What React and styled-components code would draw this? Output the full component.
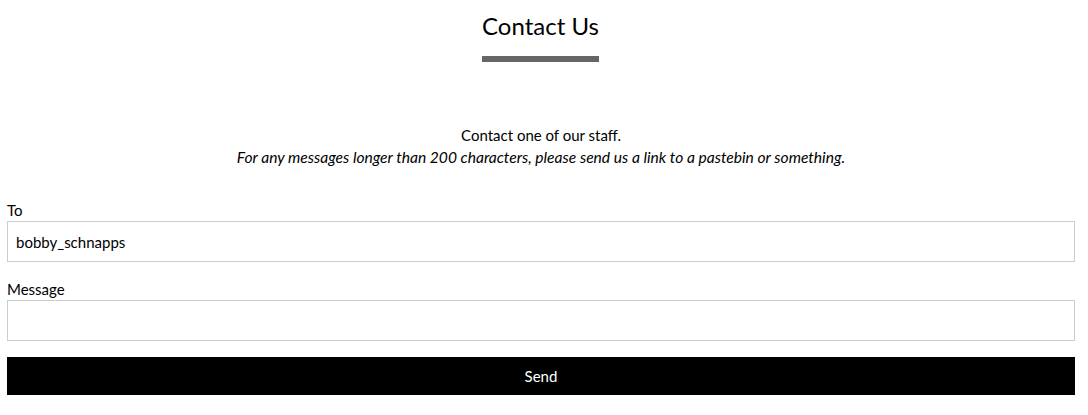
import styled, { createGlobalStyle } from 'styled-components';

const GlobalStyle = createGlobalStyle`
  * { box-sizing: border-box; }
  body {
    margin: 0;
    background: #fff;
    font-family: 'Lato', 'Liberation Sans', sans-serif;
    color: #000;
  }
`;

export default function App() {
  return (
    <>
      <GlobalStyle />
      <Page>
        <Header>
          <Title>Contact Us</Title>
          <Underline />
        </Header>
        <Intro>
          <p>Contact one of our staff.</p>
          <Note>
            For any messages longer than 200 characters, please send us a link
            to a pastebin or something.
          </Note>
        </Intro>
        <Form onSubmit={(e) => e.preventDefault()}>
          <Field>
            <Label htmlFor="to">To</Label>
            <Input id="to" defaultValue="bobby_schnapps" />
          </Field>
          <Field>
            <Label htmlFor="message">Message</Label>
            <Input id="message" />
          </Field>
          <SendButton type="submit">Send</SendButton>
        </Form>
      </Page>
    </>
  );
}

const Page = styled.div`
  padding: 12px 13px 0 7px;
`;
const Header = styled.div`
  display: flex;
  flex-direction: column;
  align-items: center;
`;
const Title = styled.h1`
  margin: 0 0 0 -1px;
  font-size: 24px;
  font-weight: 400;
  line-height: 28px;
`;
const Underline = styled.div`
  width: 117px;
  height: 6px;
  background-color: #666;
  margin: 16px 0 0 -1px;
`;
const Intro = styled.div`
  text-align: center;
  font-size: 15px;
  line-height: 22px;
  margin-top: 62px;
  p {
    margin: 0;
  }
`;
const Note = styled.p`
  font-style: italic;
  font-size: 15.6px;
`;
const Form = styled.form`
  margin-top: 31px;
  display: flex;
  flex-direction: column;
`;
const Field = styled.div`
  display: flex;
  flex-direction: column;
  margin-bottom: 16px;
`;
const Label = styled.label`
  font-size: 15px;
  line-height: 22px;
`;
const Input = styled.input`
  height: 41px;
  border: 1px solid #ccc;
  padding: 0 8px;
  font-family: 'Lato', 'Liberation Sans', sans-serif;
  font-size: 15px;
  color: #000;
  outline: none;
`;
const SendButton = styled.button`
  height: 38px;
  border: none;
  background-color: #000;
  color: #fff;
  font-family: 'Lato', 'Liberation Sans', sans-serif;
  font-size: 15px;
  cursor: pointer;
`;
